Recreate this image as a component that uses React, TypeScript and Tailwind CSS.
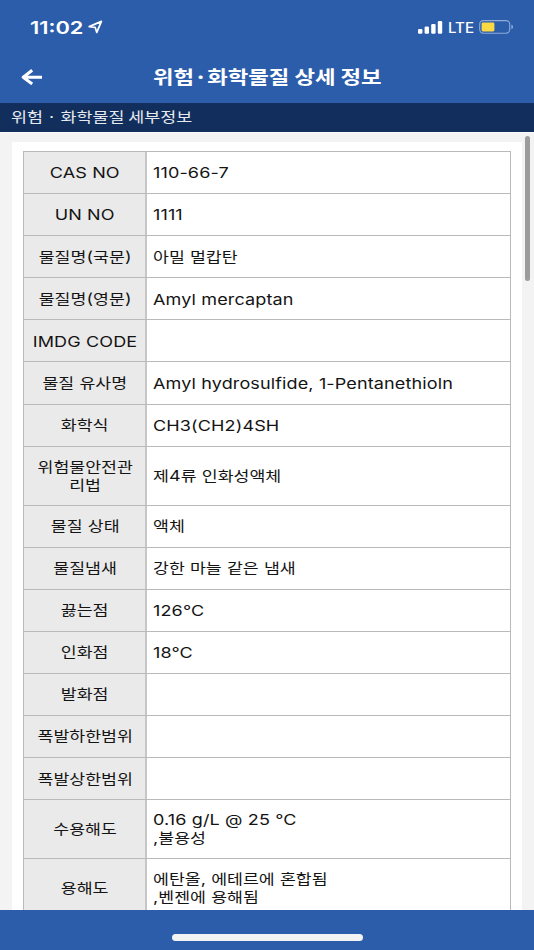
import React from "react";

type Row = { label: string[]; value: string[]; tall?: boolean };

const rows: Row[] = [
  { label: ["CAS NO"], value: ["110-66-7"] },
  { label: ["UN NO"], value: ["1111"] },
  { label: ["물질명(국문)"], value: ["아밀 멀캅탄"] },
  { label: ["물질명(영문)"], value: ["Amyl mercaptan"] },
  { label: ["IMDG CODE"], value: [] },
  { label: ["물질 유사명"], value: ["Amyl hydrosulfide, 1-Pentanethioln"] },
  { label: ["화학식"], value: ["CH3(CH2)4SH"] },
  { label: ["위험물안전관", "리법"], value: ["제4류 인화성액체"], tall: true },
  { label: ["물질 상태"], value: ["액체"] },
  { label: ["물질냄새"], value: ["강한 마늘 같은 냄새"] },
  { label: ["끓는점"], value: ["126°C"] },
  { label: ["인화점"], value: ["18°C"] },
  { label: ["발화점"], value: [] },
  { label: ["폭발하한범위"], value: [] },
  { label: ["폭발상한범위"], value: [] },
  { label: ["수용해도"], value: ["0.16 g/L @ 25 °C", ",불용성"], tall: true },
  { label: ["용해도"], value: ["에탄올, 에테르에 혼합됨", ",벤젠에 용해됨"], tall: true },
];

/* Hangul and Latin runs get their own family and optical size. */
function Mixed({ text }: { text: string }) {
  return (
    <>
      {text.split(/([가-힣]+)/).filter(Boolean).map((part, i) =>
        /[가-힣]/.test(part) ? (
          <span key={i} className="font-['Noto_Sans_CJK_KR',sans-serif] text-[14.2px]">{part}</span>
        ) : (
          <span key={i} className="font-['Inter','Noto_Sans_CJK_KR',sans-serif] text-[14.8px] tracking-[0.11px]">{part}</span>
        )
      )}
    </>
  );
}

function Lines({ lines, center }: { lines: string[]; center?: boolean }) {
  const latinOnly = lines.length === 1 && !/[가-힣]/.test(lines[0]);
  return (
    <div
      className={`flex flex-col ${center ? "items-center" : "items-start"} ${latinOnly ? "pt-[1.4px]" : lines.length > 1 ? "pb-0" : "pb-[0.4px]"}`}
    >
      {lines.map((line) => (
        <div
          key={line}
          className={
            center
              ? "h-[17.8px] origin-center scale-x-[1.217] whitespace-pre leading-[17.8px]"
              : "h-[17.8px] origin-left scale-x-[1.217] whitespace-pre leading-[17.8px]"
          }
        >
          <Mixed text={line} />
        </div>
      ))}
    </div>
  );
}

export default function App() {
  return (
    <div className="flex h-[950px] w-[534px] flex-col overflow-hidden bg-[#f3f3f3] font-['Inter','Noto_Sans_CJK_KR',sans-serif]">
      <header className="h-[103px] shrink-0 bg-[#2c5dab] text-white">
        <div className="flex h-[54px] items-center justify-between pl-[30px] pr-[20px]">
          <div className="flex items-center">
            <div className="w-[54px] pt-px">
              <span className="inline-block origin-left scale-x-[1.24] text-[17.6px] font-semibold leading-6">11:02</span>
            </div>
            <svg className="ml-[4px]" width="16" height="14" viewBox="0 0 16 14" fill="none" stroke="white" strokeWidth="1.7" strokeLinejoin="round">
              <path d="M1.2 6.6 13.4 1.4 8.8 12.4 7.2 7.4Z" />
            </svg>
          </div>
          <div className="flex items-center">
            <svg width="25" height="13" viewBox="0 0 25 13" fill="white">
              <rect x="0" y="8" width="4.4" height="4.8" rx="1.2" />
              <rect x="6.6" y="5.6" width="4.4" height="7.2" rx="1.2" />
              <rect x="13.2" y="3" width="4.4" height="9.8" rx="1.2" />
              <rect x="19.8" y="0" width="4.4" height="12.8" rx="1.2" />
            </svg>
            <div className="ml-[5px] w-[31px] pb-px">
              <span className="inline-block origin-left scale-x-[1.08] text-[14px] font-medium leading-5">LTE</span>
            </div>
            <svg width="35" height="14" viewBox="0 0 35 14" fill="none">
              <rect x="0.7" y="0.6" width="30" height="12.6" rx="3.6" stroke="#8fabd6" strokeWidth="1.1" />
              <rect x="2.6" y="2.4" width="12.8" height="9" rx="1.4" fill="#fbd945" />
              <path d="M32.4 4.8c2.2.6 2.2 3.8 0 4.4Z" fill="#8fabd6" />
            </svg>
          </div>
        </div>
        <div className="grid h-[46px] grid-cols-[1fr_auto_1fr] items-center pl-[21px] pr-[21px]">
          <svg width="22" height="16" viewBox="0 0 22 16" fill="none" stroke="white" strokeWidth="3" strokeLinejoin="round">
            <path d="M21 8.2H2.6M11.2 1.2 2.2 8.2l9 6.8" />
          </svg>
          <h1 className="scale-x-[1.2] whitespace-pre pb-[2px] font-['Noto_Sans_CJK_KR',sans-serif] text-[18.6px] font-bold leading-7">위험·화학물질 상세 정보</h1>
        </div>
      </header>
      <div className="flex h-[29px] shrink-0 items-center bg-[#112e5d] pb-[3px] pl-[11px] text-[#e6eaf0]">
        <h2 className="origin-left scale-x-[1.225] whitespace-pre font-['Noto_Sans_CJK_KR',sans-serif] text-[14.2px] leading-5">위험 · 화학물질 세부정보</h2>
      </div>
      <main className="flex h-[778px] shrink-0 justify-between overflow-hidden border-t border-[#fbfbfb] pl-3 pr-1">
        <section className="mt-[9px] h-[800px] w-[510px] bg-white pl-[11px] pt-[9px]">
          <div className="w-[488px] border-x border-t border-[#bababa]">
            {rows.map((row) => (
              <div
                key={row.label[0]}
                className={
                  row.tall
                    ? "flex h-[58.9px] border-b border-[#bababa] text-[#141414]"
                    : "flex h-[42.1px] border-b border-[#bababa] text-[#141414]"
                }
              >
                <div className="flex w-[123px] shrink-0 items-center justify-center border-r-2 border-[#c6c6c6] bg-[#eaeaea] pl-[0.6px]">
                  <Lines lines={row.label} center />
                </div>
                <div className="flex flex-1 items-center pl-[6px]">
                  <Lines lines={row.value} />
                </div>
              </div>
            ))}
          </div>
        </section>
        <div className="mt-[3px] h-[145px] w-[5px] rounded-full bg-[#9c9c9c]" />
      </main>
      <footer className="flex h-10 shrink-0 justify-center bg-[#2c5dab] pt-6">
        <div className="h-[6.5px] w-[191px] rounded-full bg-[#f3f3f3]" />
      </footer>
    </div>
  );
}
